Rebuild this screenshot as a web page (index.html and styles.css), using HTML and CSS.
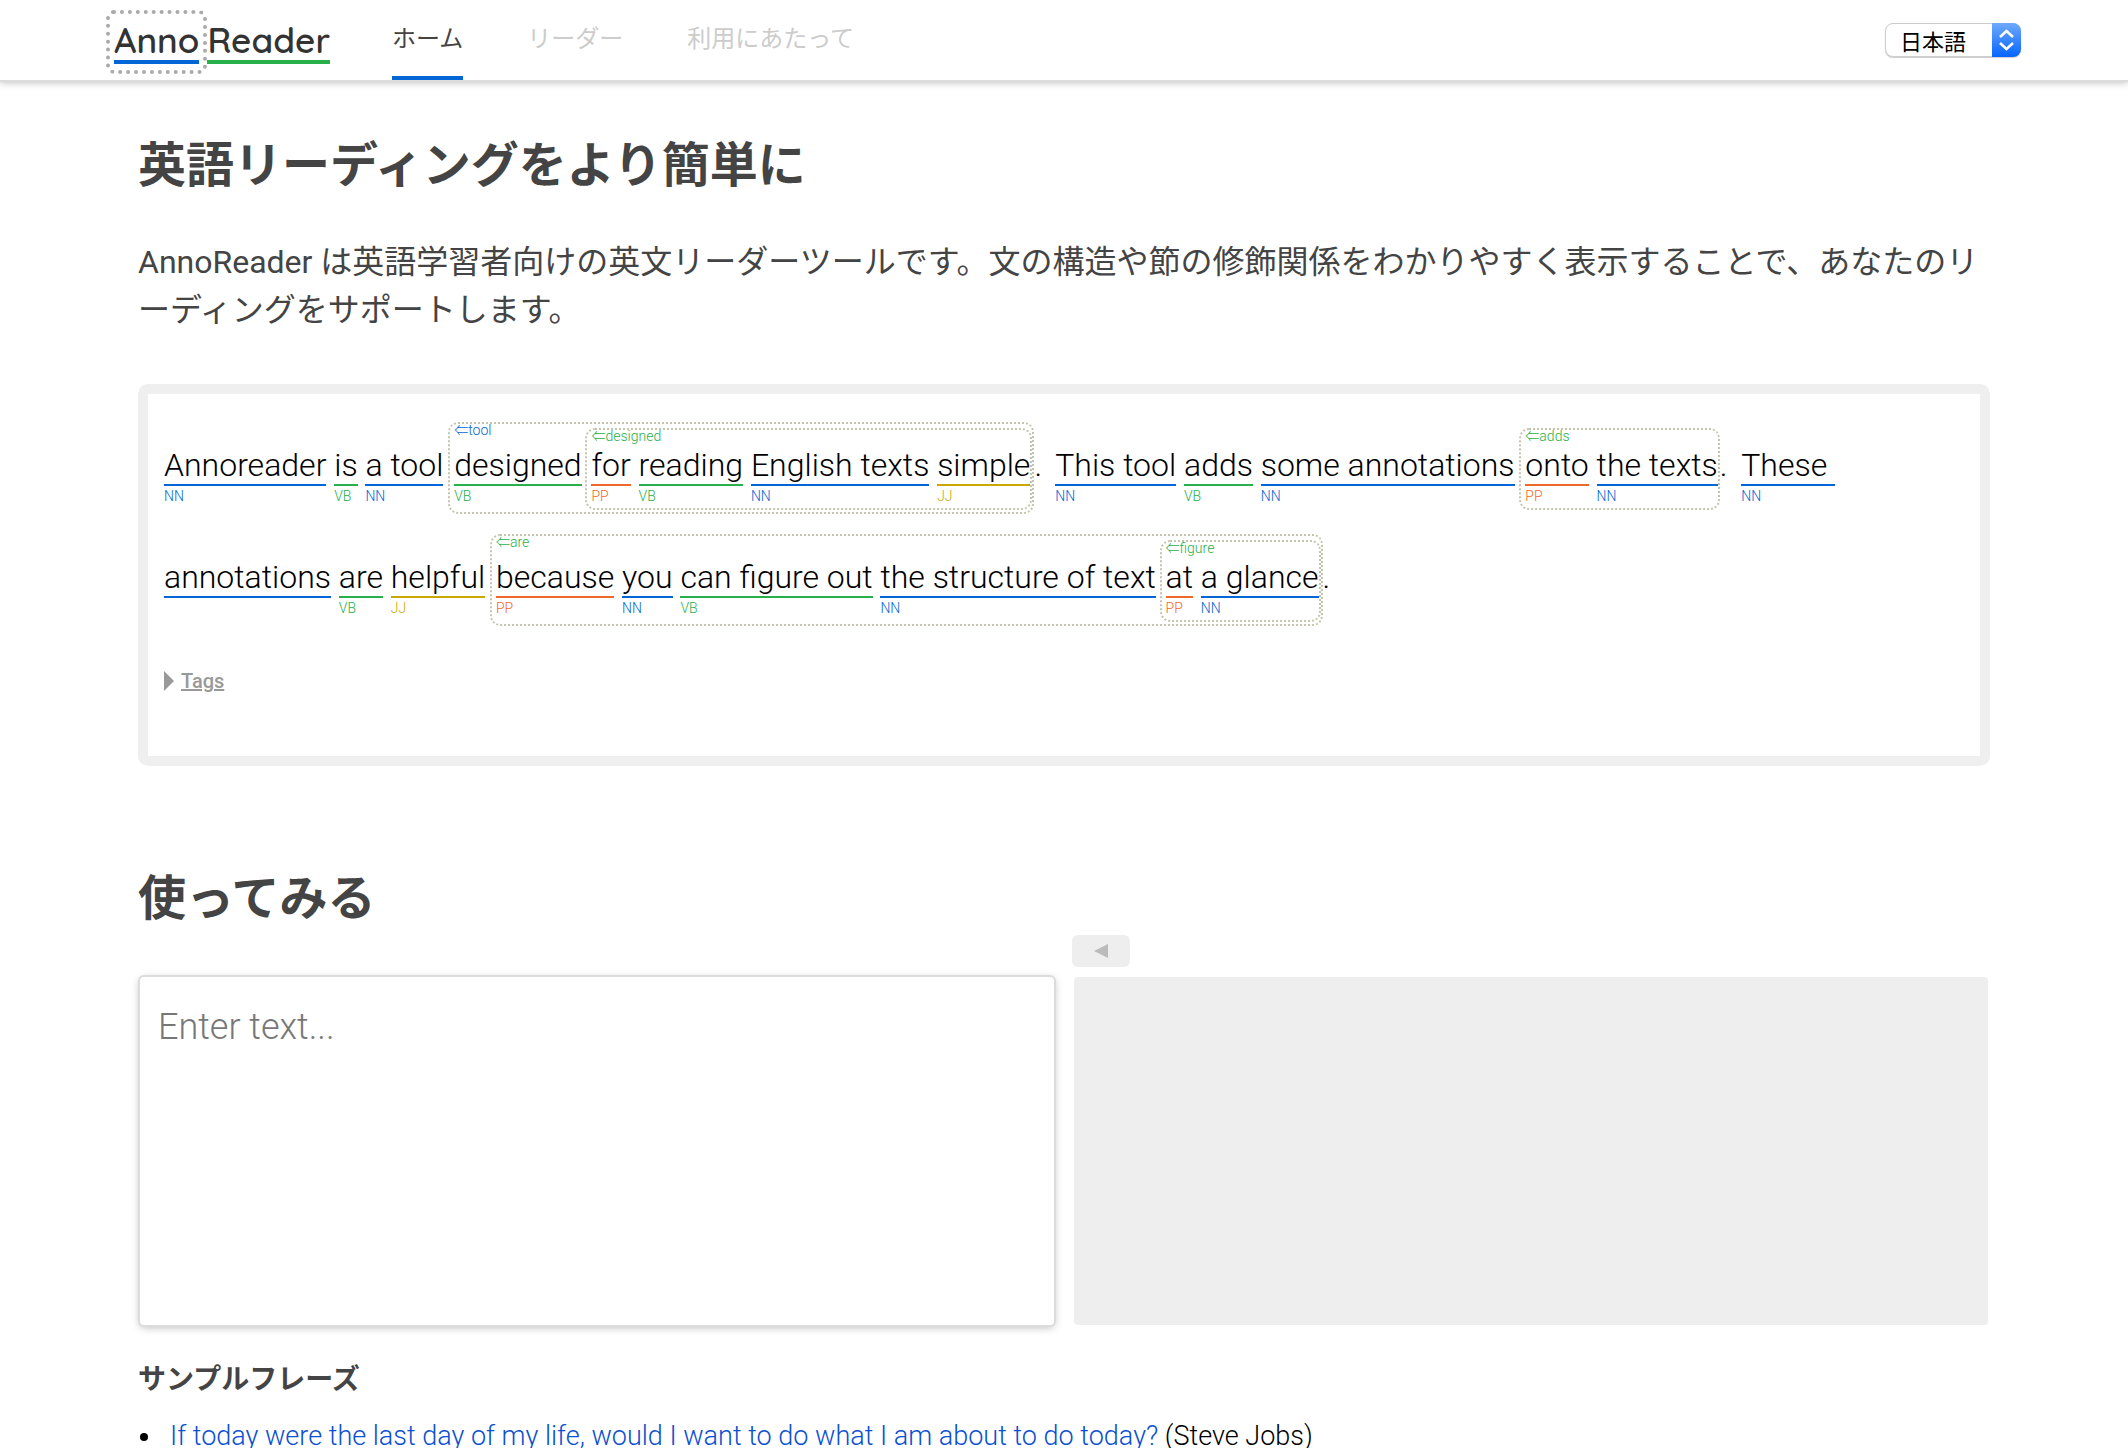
FILE: index.html
```html
<!DOCTYPE html>
<html lang="ja">
<head>
    <meta charset="UTF-8">
    <meta name="viewport" content="width=device-width, initial-scale=1.0">
    <title>AnnoReader</title>
    <link rel="stylesheet" href="styles.css">
</head>
<body>
    <header class="header">
        <a class="logo" href="#"><span class="logo-anno"><span>Anno</span></span><span class="logo-reader">Reader</span></a>
        <nav class="nav">
            <a class="active" href="#">ホーム</a>
            <a href="#reader">リーダー</a>
            <a href="#terms">利用にあたって</a>
        </nav>
        <div class="lang">
            <select aria-label="言語">
                <option>日本語</option>
                <option>English</option>
            </select>
            <svg class="lang-arrows" viewBox="0 0 29 34" aria-hidden="true">
                <path d="M8 14 L14.500 8 L21 14 M8 20 L14.500 26 L21 20" fill="none" stroke="#fff" stroke-width="2.500"/>
            </svg>
        </div>
    </header>

    <main class="main">
        <h1>英語リーディングをより簡単に</h1>
        <p class="lead">AnnoReader は英語学習者向けの英文リーダーツールです。文の構造や節の修飾関係をわかりやすく表示することで、あなたのリーディングをサポートします。</p>

        <section class="demo">
            <p class="annotated" lang="en">
                <span class="sentence"><span class="chunk nn">Annoreader<small>NN</small></span> <span class="chunk vb">is<small>VB</small></span> <span class="chunk nn">a tool<small>NN</small></span> <span class="clause outer"><span class="target nn">⇐tool</span><span class="chunk vb">designed<small>VB</small></span> <span class="clause"><span class="target vb">⇐designed</span><span class="chunk pp">for<small>PP</small></span> <span class="chunk vb">reading<small>VB</small></span> <span class="chunk nn">English texts<small>NN</small></span> <span class="chunk jj">simple<small>JJ</small></span></span></span>.</span>
                <span class="sentence"><span class="chunk nn">This tool<small>NN</small></span> <span class="chunk vb">adds<small>VB</small></span> <span class="chunk nn">some annotations<small>NN</small></span> <span class="clause"><span class="target vb">⇐adds</span><span class="chunk pp">onto<small>PP</small></span> <span class="chunk nn">the texts<small>NN</small></span></span>.</span>
                <span class="sentence"><span class="chunk nn"><small>NN</small>These&nbsp;<wbr>annotations</span> <span class="chunk vb">are<small>VB</small></span> <span class="chunk jj">helpful<small>JJ</small></span> <span class="clause outer"><span class="target vb">⇐are</span><span class="chunk pp">because<small>PP</small></span> <span class="chunk nn">you<small>NN</small></span> <span class="chunk vb">can figure out<small>VB</small></span> <span class="chunk nn">the structure of text<small>NN</small></span> <span class="clause"><span class="target vb">⇐figure</span><span class="chunk pp">at<small>PP</small></span> <span class="chunk nn">a glance<small>NN</small></span></span></span>.</span>
            </p>
            <details class="tags">
                <summary><span>Tags</span></summary>
                <p>NN, VB, JJ, PP</p>
            </details>
        </section>

        <h2>使ってみる</h2>
        <div class="toolbar">
            <button type="button" aria-label="戻る"><svg viewBox="0 0 14 14"><path d="M0 7 L14 0 V14 Z" fill="#bbb"/></svg></button>
        </div>
        <div class="panes">
            <textarea placeholder="Enter text..." aria-label="Enter text"></textarea>
            <div class="result"></div>
        </div>

        <h3>サンプルフレーズ</h3>
        <ul class="samples">
            <li><a href="#">If today were the last day of my life, would I want to do what I am about to do today?</a> (Steve Jobs)</li>
        </ul>
    </main>
</body>
</html>
```
FILE: styles.css
```css
* {
    box-sizing: border-box;
}
body {
    margin: 0;
    background-color: #fff;
    color: #000;
    font-family: Roboto, "Noto Sans CJK JP", sans-serif;
    font-weight: 300;
}
.header {
    display: flex;
    align-items: center;
    height: 80px;
    padding: 0 107px 0 106px;
    box-shadow: 0 2px 0 #dcdcdc, 0 2px 8px rgba(0, 0, 0, 0.3);
}
.logo {
    display: flex;
    align-items: center;
    margin: 3px 62px 0 0;
    color: #333;
    font: 600 35px/40px Quicksand, Lato, sans-serif;
    text-decoration: none;
}
.logo-anno {
    padding: 6px 4px;
    border: 4px dotted #aaa;
    border-radius: 8px;
}
.logo-anno span,
.logo-reader {
    display: block;
    border-bottom: 4px solid #0366d6;
}
.logo-reader {
    border-color: #28b04b;
}
.nav {
    display: flex;
    flex: 1;
    gap: 64px;
    height: 80px;
}
.nav a {
    border-bottom: 4px solid transparent;
    color: #ccc;
    font-size: 24px;
    font-weight: 400;
    line-height: 78px;
    text-decoration: none;
}
.nav .active {
    border-color: #0366d6;
    color: #444;
}
.lang {
    position: relative;
}
.lang select {
    display: block;
    width: 136px;
    height: 34px;
    padding: 6px 0 0 14px;
    appearance: none;
    border: 1px solid #ccc;
    border-radius: 8px;
    background-color: #fff;
    box-shadow: 0 1px 1px rgba(0, 0, 0, 0.2);
    color: #000;
    font: 400 22px/26px Roboto, "Noto Sans CJK JP", sans-serif;
}
.lang-arrows {
    position: absolute;
    top: 0;
    right: 0;
    width: 29px;
    height: 34px;
    border-radius: 0 8px 8px 0;
    background: linear-gradient(#6fa9fb, #0565fe);
    pointer-events: none;
}
.main {
    padding: 0 138px;
}
h1, h2, h3 {
    margin: 0;
    color: #444;
    font-weight: 700;
}
h1, h2 {
    font-size: 48px;
    line-height: 72px;
}
h1 {
    padding-top: 50px;
}
.lead {
    margin: 36px 0 50px;
    color: #444;
    font-size: 32px;
    font-weight: 400;
    line-height: 48px;
    word-break: break-all;
}
.demo {
    padding: 15px 16px;
    border: 10px solid #efefef;
    border-radius: 10px;
}
.annotated {
    margin: 0;
    font-size: 32px;
    line-height: 112px;
}
.sentence {
    margin-right: 6px;
}
.chunk {
    position: relative;
    border-bottom: 2px solid;
}
.chunk small,
.target {
    position: absolute;
    font-size: 14px;
    line-height: 16px;
    white-space: nowrap;
}
.chunk small {
    top: 42px;
    left: 0;
}
.target {
    top: -2px;
    left: 4px;
}
.clause {
    position: relative;
    margin-left: -3px;
    padding: 16px 0 24px 4px;
    border: 2px dotted #c4c4ae;
    border-radius: 10px;
}
.outer {
    padding-top: 22px;
    padding-bottom: 28px;
}
.outer .clause {
    margin-left: -4px;
}
.chunk.nn {
    border-color: #0366d6;
}
.chunk.vb {
    border-color: #28b04b;
}
.chunk.pp {
    border-color: #f0692a;
}
.chunk.jj {
    border-color: #c9a800;
}
.target.nn,
.nn small {
    color: #0366d6;
}
.target.vb,
.vb small {
    color: #28b04b;
}
.pp small {
    color: #f0692a;
}
.jj small {
    color: #c9a800;
}
.tags {
    margin: 36px 0 48px;
    color: #999;
    font-size: 20px;
    font-weight: 500;
    line-height: 24px;
}
.tags summary {
    display: flex;
    align-items: center;
    gap: 7px;
    cursor: pointer;
    text-decoration: underline;
}
.tags summary::before {
    content: "";
    border: solid transparent;
    border-width: 10px 0 10px 10px;
    border-left-color: #999;
}
h2 {
    margin-top: 97px;
}
.toolbar {
    display: flex;
    padding-left: calc(50% + 8px);
}
.toolbar button {
    display: flex;
    align-items: center;
    justify-content: center;
    width: 58px;
    height: 32px;
    border: 0;
    border-radius: 6px;
    background-color: #eee;
}
.toolbar svg {
    width: 14px;
    height: 14px;
}
.panes {
    display: grid;
    grid-template-columns: 1fr 1fr;
    gap: 20px;
    margin: 10px 2px 0;
}
.panes textarea,
.result {
    height: 348px;
    border-radius: 4px;
}
.panes textarea {
    padding: 29px 18px;
    border: 0;
    box-shadow: 0 0 0 2px #dcdcdc, 0 2px 8px rgba(0, 0, 0, 0.3);
    font: 300 36px/42px Roboto, "Noto Sans CJK JP", sans-serif;
    resize: none;
}
.panes textarea::placeholder {
    color: #777;
}
.result {
    background-color: #eee;
}
h3 {
    margin-top: 34px;
    font-size: 28px;
    line-height: 42px;
}
.samples {
    margin: 18px 0 0;
    padding-left: 32px;
    font-size: 27px;
    line-height: 34px;
    list-style: none;
}
.samples li::before {
    content: "";
    display: inline-block;
    width: 8px;
    height: 8px;
    margin: 0 22px 4px -30px;
    border-radius: 50%;
    background-color: #000;
}
.samples a {
    color: #0b50d0;
    text-decoration: none;
}
```
